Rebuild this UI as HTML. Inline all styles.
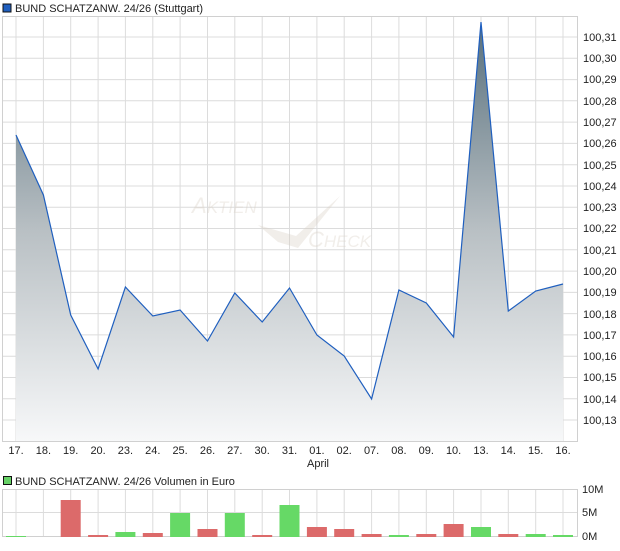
<!DOCTYPE html>
<html><head><meta charset="utf-8"><style>
body{margin:0;background:#fff;width:620px;height:546px;overflow:hidden;font-family:"Liberation Sans",sans-serif}
</style></head><body>
<svg width="620" height="546" xmlns="http://www.w3.org/2000/svg" font-family="Liberation Sans, sans-serif" font-size="11" fill="#222">
<defs>
<linearGradient id="g" gradientUnits="userSpaceOnUse" x1="0" y1="22" x2="0" y2="441">
<stop offset="0" stop-color="#58707d"/><stop offset="0.5" stop-color="#b9c0c4"/><stop offset="1" stop-color="#f7f8f9"/>
</linearGradient>
</defs>
<rect x="3" y="4" width="8" height="8" fill="#1f5fbf" stroke="#111" stroke-width="1"/>
<text x="15" y="12">BUND SCHATZANW. 24/26 (Stuttgart)</text>
<g stroke="#dcdcdc" stroke-width="1">
<path d="M16 16V441M43.4 16V441M70.7 16V441M98.1 16V441M125.4 16V441M152.8 16V441M180.1 16V441M207.5 16V441M234.8 16V441M262.2 16V441M289.5 16V441M316.9 16V441M344.2 16V441M371.6 16V441M398.9 16V441M426.3 16V441M453.6 16V441M481 16V441M508.3 16V441M535.7 16V441M563 16V441"/>
<path d="M3 37H578M3 58.3H578M3 79.6H578M3 100.8H578M3 122.1H578M3 143.4H578M3 164.7H578M3 186H578M3 207.2H578M3 228.5H578M3 249.8H578M3 271.1H578M3 292.4H578M3 313.6H578M3 334.9H578M3 356.2H578M3 377.5H578M3 398.8H578M3 420H578"/>
<rect x="2.5" y="16.5" width="575" height="425" fill="none" stroke="#d0d0d0"/>
</g>
<path d="M16 135L43.4 195L70.7 315L98.1 369L125.4 287L152.8 316L180.1 310L207.5 341L234.8 293L262.2 322L289.5 288L316.9 335L344.2 356L371.6 399L398.9 290L426.3 303L453.6 337L481 22L508.3 311L535.7 291L563 284L563 441L16 441Z" fill="url(#g)"/>
<path d="M16 135L43.4 195L70.7 315L98.1 369L125.4 287L152.8 316L180.1 310L207.5 341L234.8 293L262.2 322L289.5 288L316.9 335L344.2 356L371.6 399L398.9 290L426.3 303L453.6 337L481 22L508.3 311L535.7 291L563 284" fill="none" stroke="#1f5fbf" stroke-width="1.2"/>
<g opacity="0.35" fill="#d8cfc4" font-style="italic">
<text x="192" y="213" font-size="22">A<tspan font-size="17">KTIEN</tspan></text>
<text x="308" y="247" font-size="22">C<tspan font-size="17">HECK</tspan></text>
<path d="M258 225L278 242L298 248L340 196L296 236Z"/>
</g>
<g font-size="11">
<text x="583" y="41">100,31</text><text x="583" y="62">100,30</text><text x="583" y="83">100,29</text><text x="583" y="105">100,28</text><text x="583" y="126">100,27</text><text x="583" y="147">100,26</text><text x="583" y="169">100,25</text><text x="583" y="190">100,24</text><text x="583" y="211">100,23</text><text x="583" y="232">100,22</text><text x="583" y="254">100,21</text><text x="583" y="275">100,20</text><text x="583" y="296">100,19</text><text x="583" y="318">100,18</text><text x="583" y="339">100,17</text><text x="583" y="360">100,16</text><text x="583" y="381">100,15</text><text x="583" y="403">100,14</text><text x="583" y="424">100,13</text>
</g>
<g text-anchor="middle" font-size="11">
<text x="16" y="454">17.</text><text x="43.4" y="454">18.</text><text x="70.7" y="454">19.</text><text x="98.1" y="454">20.</text><text x="125.4" y="454">23.</text><text x="152.8" y="454">24.</text><text x="180.1" y="454">25.</text><text x="207.5" y="454">26.</text><text x="234.8" y="454">27.</text><text x="262.2" y="454">30.</text><text x="289.5" y="454">31.</text><text x="316.9" y="454">01.</text><text x="344.2" y="454">02.</text><text x="371.6" y="454">07.</text><text x="398.9" y="454">08.</text><text x="426.3" y="454">09.</text><text x="453.6" y="454">10.</text><text x="481" y="454">13.</text><text x="508.3" y="454">14.</text><text x="535.7" y="454">15.</text><text x="563" y="454">16.</text>
<text x="318" y="467">April</text>
</g>
<rect x="3.5" y="476.5" width="8" height="8" fill="#66d166" stroke="#111"/>
<text x="15" y="485">BUND SCHATZANW. 24/26 Volumen in Euro</text>
<g stroke="#dcdcdc">
<path d="M16 489V537M43.4 489V537M70.7 489V537M98.1 489V537M125.4 489V537M152.8 489V537M180.1 489V537M207.5 489V537M234.8 489V537M262.2 489V537M289.5 489V537M316.9 489V537M344.2 489V537M371.6 489V537M398.9 489V537M426.3 489V537M453.6 489V537M481 489V537M508.3 489V537M535.7 489V537M563 489V537"/>
<path d="M3 512.5H578"/>
<rect x="2.5" y="489.5" width="575" height="47" fill="none" stroke="#d0d0d0"/>
</g>
<g>
<rect x="6" y="536" width="20" height="1" fill="#66d966"/>
<rect x="60.7" y="500" width="20" height="37" fill="#dc6a6a"/>
<rect x="88.1" y="535" width="20" height="2" fill="#dc6a6a"/>
<rect x="115.4" y="532" width="20" height="5" fill="#66d966"/>
<rect x="142.8" y="533" width="20" height="4" fill="#dc6a6a"/>
<rect x="170.1" y="513" width="20" height="24" fill="#66d966"/>
<rect x="197.5" y="529" width="20" height="8" fill="#dc6a6a"/>
<rect x="224.8" y="513" width="20" height="24" fill="#66d966"/>
<rect x="252.2" y="535" width="20" height="2" fill="#dc6a6a"/>
<rect x="279.5" y="505" width="20" height="32" fill="#66d966"/>
<rect x="306.9" y="527" width="20" height="10" fill="#dc6a6a"/>
<rect x="334.2" y="529" width="20" height="8" fill="#dc6a6a"/>
<rect x="361.6" y="534" width="20" height="3" fill="#dc6a6a"/>
<rect x="388.9" y="535" width="20" height="2" fill="#66d966"/>
<rect x="416.3" y="534" width="20" height="3" fill="#dc6a6a"/>
<rect x="443.6" y="524" width="20" height="13" fill="#dc6a6a"/>
<rect x="471" y="527" width="20" height="10" fill="#66d966"/>
<rect x="498.3" y="534" width="20" height="3" fill="#dc6a6a"/>
<rect x="525.7" y="534" width="20" height="3" fill="#66d966"/>
<rect x="553" y="535" width="20" height="2" fill="#66d966"/>
</g>
<text x="582" y="493">10M</text><text x="582" y="516">5M</text><text x="582" y="540">0M</text>
</svg>
</body></html>
